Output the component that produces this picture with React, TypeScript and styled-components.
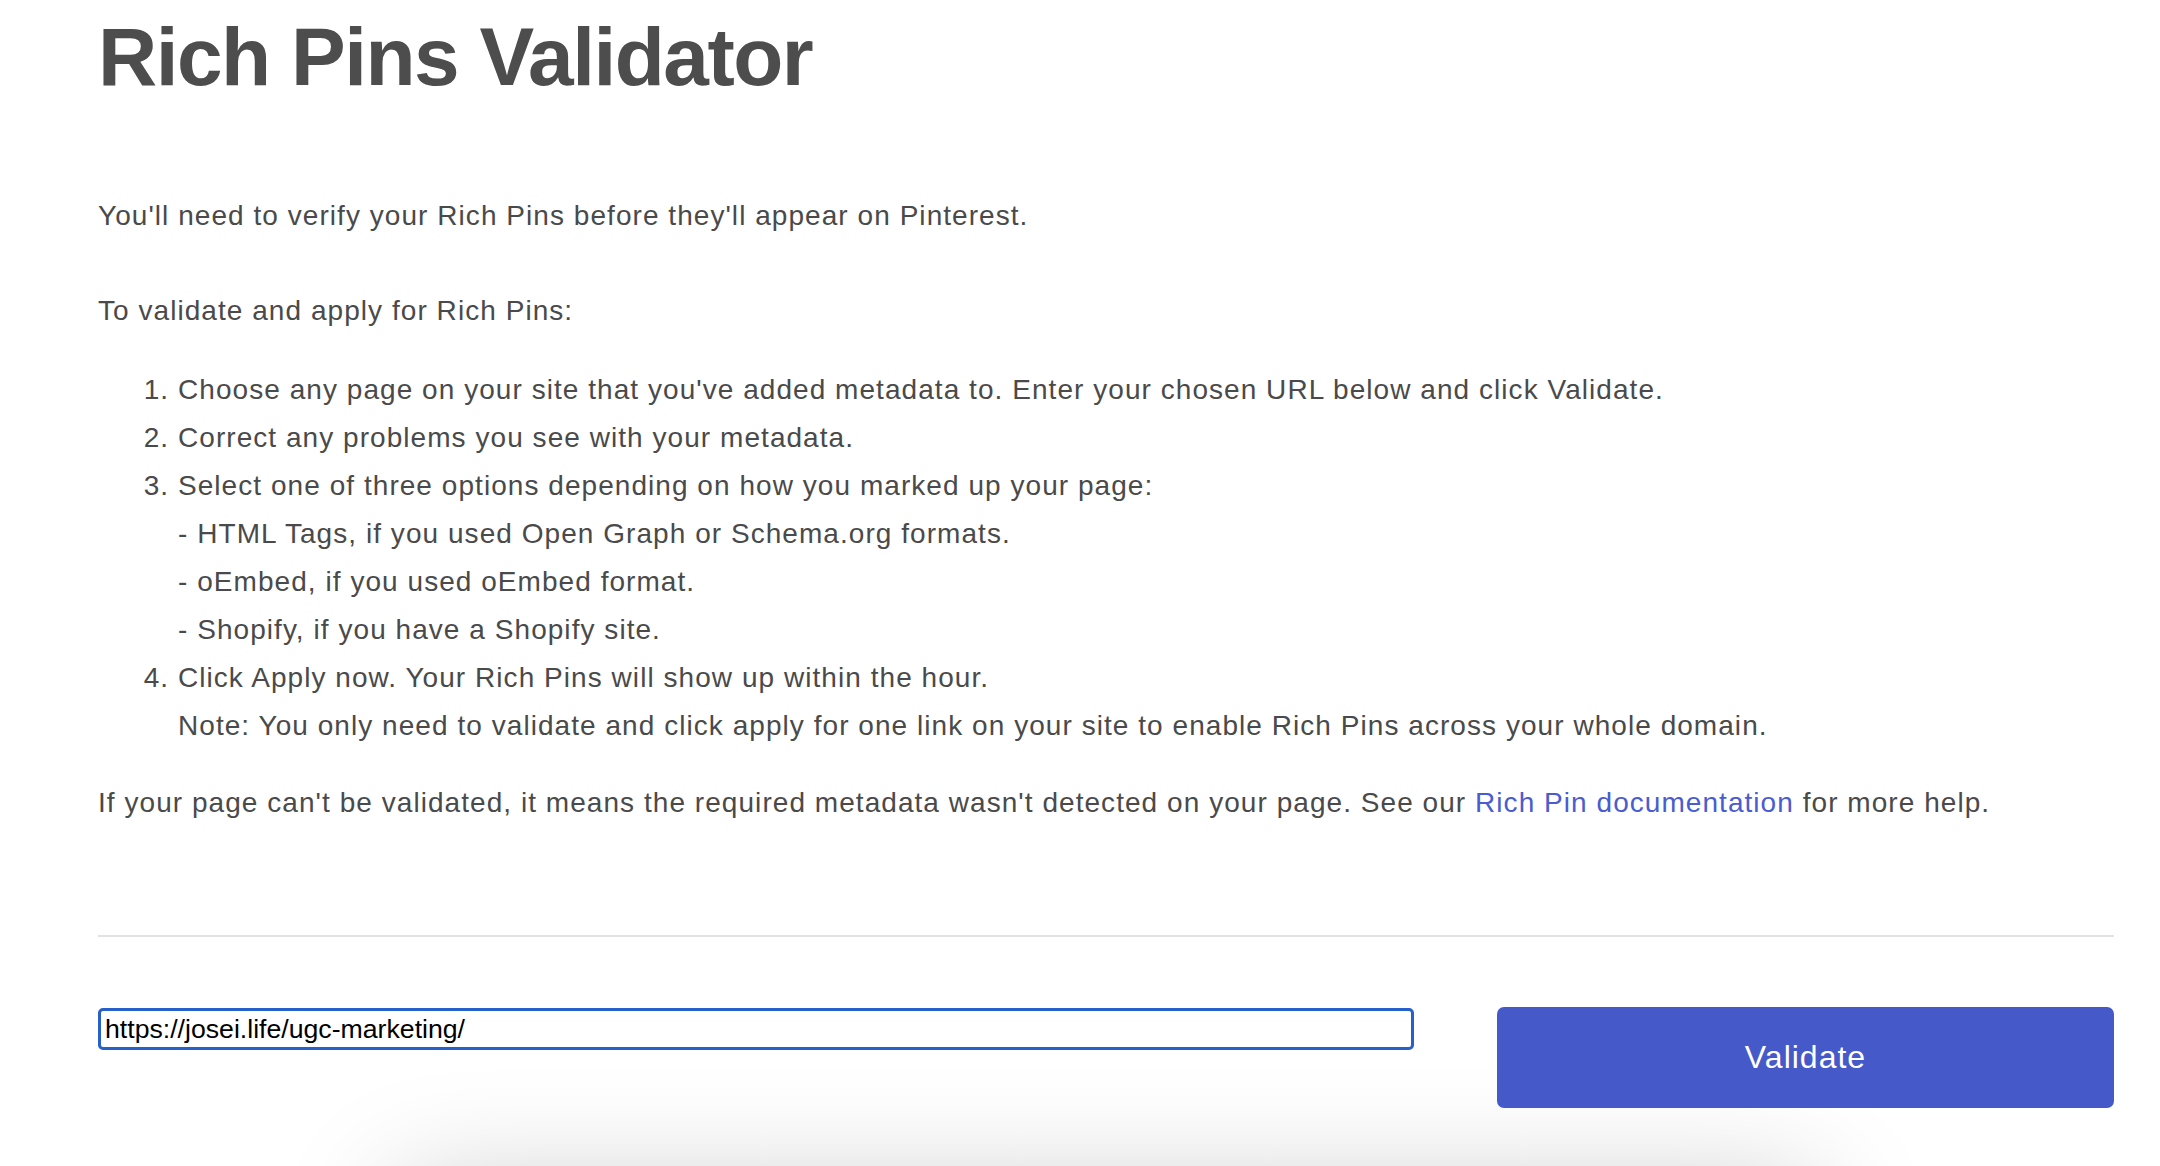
import React from "react";
import styled, { createGlobalStyle } from "styled-components";

const GlobalStyle = createGlobalStyle`
  html, body {
    margin: 0;
    padding: 0;
    background: #ffffff;
  }
  body {
    font-family: "Liberation Sans", Arial, Helvetica, sans-serif;
    color: #4a4a4a;
  }
  * { box-sizing: border-box; }
`;

const Page = styled.main`
  padding: 0 46px 0 98px;
`;

const Title = styled.h1`
  margin: 16px 0 0;
  font-size: 82px;
  line-height: 82px;
  font-weight: 700;
  letter-spacing: -1.5px;
  color: #4d4d4d;
`;

const Paragraph = styled.p<{ $top: number }>`
  margin: ${(p) => p.$top}px 0 0;
  font-size: 28px;
  line-height: 48px;
  letter-spacing: 1.05px;
  color: #4a4a4a;
`;

const Steps = styled.ol`
  margin: 31px 0 0;
  padding: 0 0 0 80px;
  font-size: 28px;
  line-height: 48px;
  letter-spacing: 1.05px;
  color: #4a4a4a;
`;

const Step = styled.li``;

const SubLine = styled.span`
  display: block;
`;

const Link = styled.a`
  color: #4a5ccf;
  text-decoration: none;
`;

const Divider = styled.hr`
  margin: 108px 0 0;
  border: none;
  height: 2px;
  background: #e2e2e2;
`;

const FormRow = styled.form`
  margin-top: 70px;
  display: grid;
  grid-template-columns: 1fr 617px;
  column-gap: 83px;
  align-items: start;
`;

const UrlInput = styled.input`
  height: 42px;
  margin-top: 1px;
  padding: 2px 4px;
  border: 3px solid #2760c9;
  border-radius: 5px;
  font-family: "Liberation Sans", Arial, sans-serif;
  font-size: 26.67px;
  color: #000000;
  background: #ffffff;
  outline: none;
`;

const ValidateButton = styled.button`
  height: 101px;
  border: none;
  border-radius: 7px;
  background: #4659c9;
  color: #ffffff;
  font-family: "Liberation Sans", Arial, sans-serif;
  font-size: 32px;
  letter-spacing: 1px;
  cursor: pointer;
`;

const ResultsCard = styled.section`
  margin: 82px auto 0;
  width: 1420px;
  height: 300px;
  background: #ffffff;
  border-radius: 16px;
  box-shadow: 0 0 120px rgba(0, 0, 0, 0.22);
`;

export default function App() {
  return (
    <>
      <GlobalStyle />
      <Page>
        <Title>Rich Pins Validator</Title>
        <Paragraph $top={94}>
          You'll need to verify your Rich Pins before they'll appear on Pinterest.
        </Paragraph>
        <Paragraph $top={47}>To validate and apply for Rich Pins:</Paragraph>
        <Steps>
          <Step>
            Choose any page on your site that you've added metadata to. Enter your chosen URL below and
            click Validate.
          </Step>
          <Step>Correct any problems you see with your metadata.</Step>
          <Step>
            Select one of three options depending on how you marked up your page:
            <SubLine>- HTML Tags, if you used Open Graph or Schema.org formats.</SubLine>
            <SubLine>- oEmbed, if you used oEmbed format.</SubLine>
            <SubLine>- Shopify, if you have a Shopify site.</SubLine>
          </Step>
          <Step>
            Click Apply now. Your Rich Pins will show up within the hour.
            <SubLine>
              Note: You only need to validate and click apply for one link on your site to enable Rich Pins
              across your whole domain.
            </SubLine>
          </Step>
        </Steps>
        <Paragraph $top={29}>
          If your page can't be validated, it means the required metadata wasn't detected on your page. See
          our <Link href="#">Rich Pin documentation</Link> for more help.
        </Paragraph>
        <Divider />
        <FormRow onSubmit={(e) => e.preventDefault()}>
          <UrlInput type="text" defaultValue="https://josei.life/ugc-marketing/" />
          <ValidateButton type="submit">Validate</ValidateButton>
        </FormRow>
        <ResultsCard />
      </Page>
    </>
  );
}
